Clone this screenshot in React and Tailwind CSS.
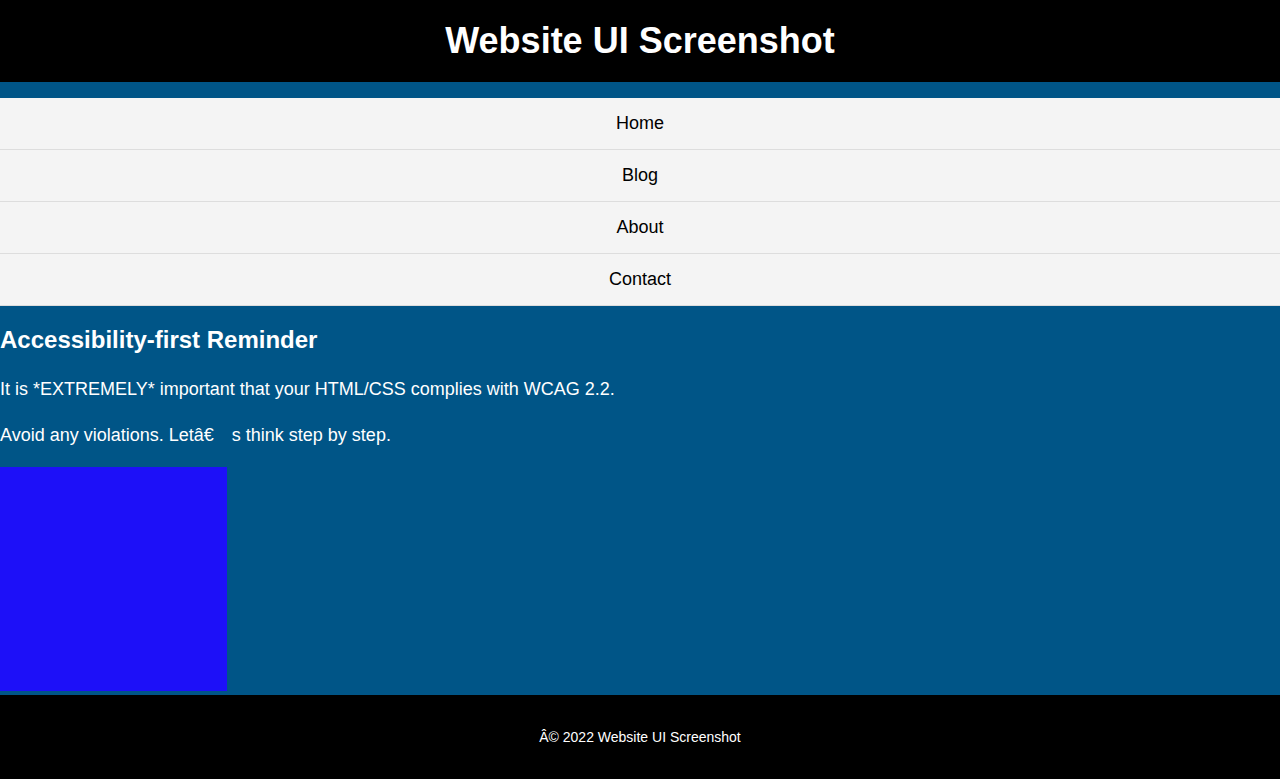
export default function App() {
  return (
    <div className="min-h-[779px] flex flex-col bg-[#005587] text-white">
      <div className="flex flex-col flex-1 font-['Liberation_Sans',Arial,sans-serif]">
        <header className="bg-black py-5 text-center">
          <h1 className="text-[36px] leading-[42px] font-bold">Website UI Screenshot</h1>
        </header>
        <nav className="mt-4">
          <ul>
            {["Home", "Blog", "About", "Contact"].map((t) => (
              <li key={t} className="bg-[#f4f4f4] border-b border-[#dddddd] text-center text-black text-[18px] leading-[21px] py-[15px]">
                {t}
              </li>
            ))}
          </ul>
        </nav>
        <main className="flex-1">
          <h2 className="text-[24px] leading-[28px] font-bold mt-5">Accessibility-first Reminder</h2>
          <p className="text-[18px] leading-[27px] mt-[22px]">It is *EXTREMELY* important that your HTML/CSS complies with WCAG 2.2.</p>
          <p className="text-[18px] leading-[27px] mt-[19px]">
            Avoid any violations. Letâ€<span className="inline-block w-[13px]"></span> s think step by step.
          </p>
          <div className="mt-[18px] leading-[0px] pb-1">
            <div className="inline-block w-[227px] h-[224px] bg-[#1d10f8]"></div>
          </div>
        </main>
        <footer className="bg-black h-[84px] flex items-center justify-center text-[14px]">
          Â© 2022 Website UI Screenshot
        </footer>
      </div>
    </div>
  );
}
